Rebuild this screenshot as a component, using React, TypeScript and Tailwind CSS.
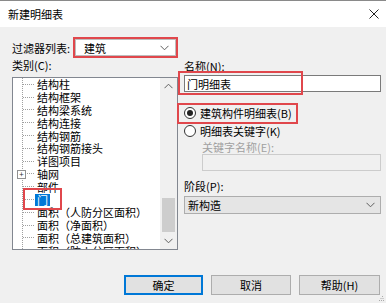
import React from "react";

const FONT = "font-['Microsoft_YaHei','Noto_Sans_CJK_SC',sans-serif]";

const treeRows = [
  { t: "结构柱" },
  { t: "结构框架" },
  { t: "结构梁系统" },
  { t: "结构连接" },
  { t: "结构钢筋" },
  { t: "结构钢筋接头" },
  { t: "详图项目" },
  { t: "轴网", plus: true },
  { t: "部件" },
  { t: "门", sel: true },
  { t: "面积（人防分区面积）" },
  { t: "面积（净面积）" },
  { t: "面积（总建筑面积）" },
  { t: "面积（防火分区面积）" },
];

function Chevron({ className }: { className?: string }) {
  return (
    <svg width="9" height="6" viewBox="0 0 9 6" className={className}>
      <path d="M0.5 0.8 L4.5 4.8 L8.5 0.8" fill="none" stroke="#606060" strokeWidth="1" />
    </svg>
  );
}

function Radio({ checked }: { checked?: boolean }) {
  return (
    <span className="flex h-[12px] w-[12px] items-center justify-center rounded-full border border-[#333] bg-white">
      {checked && <span className="h-[6px] w-[6px] rounded-full bg-[#222]" />}
    </span>
  );
}

export default function App() {
  return (
    <div className={`${FONT} relative flex h-[303px] w-[386px] flex-col overflow-hidden border-t border-[#8a8a8a] bg-[#f0f0f0] text-[11px] leading-[14px] text-black`}>
      {/* title bar */}
      <div className="flex h-[26px] items-center justify-between bg-white pl-[8px] pr-[6px]">
        <span className="text-[11px]">新建明细表</span>
        <svg width="10" height="10" viewBox="0 0 10 10" className="mr-[1px]">
          <path d="M0.5 0.5 L9.5 9.5 M9.5 0.5 L0.5 9.5" stroke="#222" strokeWidth="1" />
        </svg>
      </div>

      {/* filter row */}
      <div className="mt-[10px] flex h-[21px] items-center pl-[12px]">
        <span className="w-[61px]">过滤器列表:</span>
        <div className="flex h-[21px] w-[105px] items-center border-2 border-[#e0474c] bg-white p-0">
          <div className="flex h-full w-full items-center justify-between border border-[#bdbdbd] pl-[8px] pr-[6px]">
            <span>建筑</span>
            <Chevron />
          </div>
        </div>
      </div>

      <div className="flex pl-[12px]">
        {/* left column */}
        <div className="flex w-[166px] flex-col">
          <span className="h-[14px]">类别(C):</span>
          <div className="relative mt-[5px] flex h-[173px] border border-[#828790] bg-white">
            <div className="flex-1 overflow-hidden">
              <div className="ml-[9px] flex flex-col border-l border-dotted border-[#a0a0a0]">
                {treeRows.map((r, i) => (
                  <div key={i} className="relative flex h-[12.8px] items-center whitespace-nowrap leading-[12px]">
                    <span className="w-[11px] border-t border-dotted border-[#a0a0a0]" />
                    {r.plus && (
                      <span className="absolute left-[-6px] top-[2px] flex h-[9px] w-[9px] items-center justify-center border border-[#919191] bg-white text-[8px] leading-none text-[#333]">
                        +
                      </span>
                    )}
                    {r.sel ? (
                      <span className="ml-[1px] bg-[#0078d7] px-[2px] text-white">{r.t}</span>
                    ) : (
                      <span className="ml-[3px]">{r.t}</span>
                    )}
                  </div>
                ))}
              </div>
            </div>
            {/* scrollbar */}
            <div className="flex w-[17px] flex-col items-center bg-[#f0f0f0]">
              <div className="flex h-[17px] items-center justify-center">
                <Chevron className="rotate-180" />
              </div>
              <div className="mt-[103px] h-[35px] w-[13px] bg-[#cdcdcd]" />
              <div className="mt-auto flex h-[17px] items-center justify-center">
                <Chevron />
              </div>
            </div>
            {/* annotation around 门 */}
            <div className="absolute left-[10px] top-[110px] h-[22px] w-[39px] border-2 border-[#e0474c]" />
          </div>
        </div>

        {/* right column */}
        <div className="ml-[6px] flex w-[197px] flex-col">
          <span className="mt-[1px] h-[14px]">名称(N):</span>
          <div className="mt-[2px] flex h-[17px] items-center border border-[#7a7a7a] bg-white pl-[2px]">
            门明细表
          </div>
          <div className="mt-[12px] flex h-[18px] items-center gap-[4px]">
            <Radio checked />
            <span>建筑构件明细表(B)</span>
          </div>
          <div className="flex h-[18px] items-center gap-[4px]">
            <Radio />
            <span>明细表关键字(K)</span>
          </div>
          <span className="h-[14px] pl-[18px] text-[#a0a0a0]">关键字名称(E):</span>
          <div className="ml-[18px] h-[17px] border border-[#cccccc] bg-[#f0f0f0]" />
          <span className="mt-[8px] h-[14px]">阶段(P):</span>
          <div className="mt-[3px] flex h-[18px] items-center justify-between border border-[#adadad] bg-[#e5e5e5] pl-[3px] pr-[5px]">
            <span>新构造</span>
            <Chevron />
          </div>
        </div>
      </div>

      {/* buttons */}
      <div className="mt-auto mb-[8px] flex justify-end gap-[8px] pr-[6px]">
        <button className="h-[20px] w-[79px] border-2 border-[#0078d7] bg-[#e1e1e1]">确定</button>
        <button className="h-[20px] w-[80px] border border-[#adadad] bg-[#e1e1e1]">取消</button>
        <button className="h-[20px] w-[81px] border border-[#adadad] bg-[#e1e1e1]">帮助(H)</button>
      </div>

      {/* size grip */}
      <svg width="5" height="5" viewBox="0 0 5 5" className="absolute bottom-[2px] right-[2px]">
        <rect x="3" y="0" width="1" height="1" fill="#aaa" />
        <rect x="1.5" y="2" width="1" height="1" fill="#aaa" />
        <rect x="3.5" y="2" width="1" height="1" fill="#aaa" />
        <rect x="0" y="4" width="1" height="1" fill="#aaa" />
        <rect x="2" y="4" width="1" height="1" fill="#aaa" />
        <rect x="4" y="4" width="1" height="1" fill="#aaa" />
      </svg>

      {/* annotations */}
      <div className="absolute left-[178px] top-[70px] h-[24px] w-[125px] border-2 border-[#e0474c]" />
      <div className="absolute left-[177px] top-[102px] h-[21px] w-[121px] border-2 border-[#e0474c]" />
    </div>
  );
}
